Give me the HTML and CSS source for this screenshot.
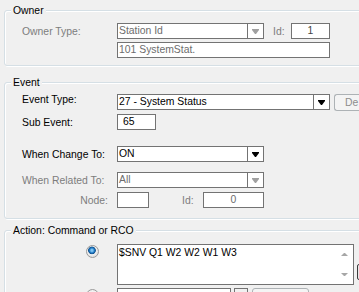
FILE: index.html
```html
<!DOCTYPE html>
<html lang="en">
<head>
    <meta charset="UTF-8">
    <title>Event Action</title>
    <link rel="stylesheet" href="styles.css">
</head>
<body>
    <fieldset class="group owner">
        <legend>Owner</legend>
        <div class="row first">
            <span class="lbl off">Owner Type:</span>
            <div class="box combo off w147"><span class="val">Station Id</span><span class="drop"></span></div>
            <span class="id-lbl off">Id:</span>
            <div class="box off num w39 dark">1</div>
        </div>
        <div class="row gap3">
            <span class="lbl"></span>
            <div class="box off w213">101 SystemStat.</div>
        </div>
    </fieldset>

    <fieldset class="group event">
        <legend>Event</legend>
        <div class="row first top">
            <span class="lbl">Event Type:</span>
            <div class="box combo w213"><span class="val">27 - System Status</span><span class="drop"></span></div>
            <button class="btn" disabled>De</button>
        </div>
        <div class="row gap4">
            <span class="lbl">Sub Event:</span>
            <div class="box w39 pad">65</div>
        </div>
        <div class="row gap16">
            <span class="lbl">When Change To:</span>
            <div class="box combo w147"><span class="val">ON</span><span class="drop"></span></div>
        </div>
        <div class="row gap10">
            <span class="lbl off">When Related To:</span>
            <div class="box combo off w147"><span class="val">All</span><span class="drop"></span></div>
        </div>
        <div class="row gap4">
            <span class="lbl off right">Node:</span>
            <div class="box w32"></div>
            <span class="id-lbl off node">Id:</span>
            <div class="box off num w61">0</div>
        </div>
    </fieldset>

    <fieldset class="group action">
        <legend>Action: Command or RCO</legend>
        <div class="row memo-row">
            <span class="pick"><span class="radio on"></span></span>
            <div class="memo">
                <div class="memo-text">$SNV Q1 W2 W2 W1 W3</div>
                <div class="scroll"><span class="arr up"></span><span class="arr down"></span></div>
            </div>
            <button class="side"></button>
        </div>
        <div class="row memo-row next">
            <span class="pick"><span class="radio"></span></span>
            <div class="box w114"></div>
            <button class="tiny"></button>
            <button class="btn plain"></button>
        </div>
    </fieldset>
</body>
</html>
```

FILE: styles.css
```css
body {
    margin: 0;
    width: 359px;
    height: 292px;
    overflow: hidden;
    background: #f0f0f0;
    font-family: "Liberation Sans", Arial, sans-serif;
    font-size: 10.4px;
    color: #000;
}
.group {
    margin: 0 0 0 4px;
    padding: 0;
    min-width: 0;
    width: 400px;
    border: 1px solid #d5dfe5;
    border-radius: 3px;
    box-shadow: inset 1px 1px 0 #fff, 1px 1px 0 #fff;
}
.group legend {
    margin-left: 6px;
    padding: 0 2px;
    line-height: 13px;
    background: #f0f0f0;
}
.owner {
    margin-top: 4px;
    padding-bottom: 7px;
}
.event {
    margin-top: 10px;
    padding-bottom: 10px;
}
.action {
    margin-top: 5px;
    height: 120px;
}
.row {
    display: flex;
    align-items: center;
    height: 16px;
    padding-left: 17px;
}
.row.first { margin-top: 6px; }
.event .row.first { margin-top: 5px; }
.row.top { align-items: flex-start; }
.gap3 { margin-top: 3px; }
.gap4 { margin-top: 4px; }
.gap10 { margin-top: 10px; }
.gap16 { margin-top: 16px; }
.lbl {
    width: 95px;
    flex: none;
    white-space: nowrap;
}
.lbl.right {
    text-align: right;
    padding-right: 9px;
    box-sizing: border-box;
}
.off { color: #7d7d7d; }
.box {
    box-sizing: border-box;
    height: 16px;
    flex: none;
    border: 1px solid #737373;
    background: #fff;
    padding: 0 1px;
    line-height: 14px;
    white-space: nowrap;
    overflow: hidden;
}
.box.off { color: #6d6d6d; }
.box.dark { color: #444; }
.box.pad { padding-left: 5px; }
.num { text-align: center; }
.w32 { width: 32px; }
.w39 { width: 39px; }
.w61 { width: 61px; }
.w114 { width: 114px; }
.w147 { width: 147px; }
.w213 { width: 213px; }
.combo {
    display: flex;
    padding: 0;
}
.combo .val {
    flex: 1;
    padding-left: 1px;
    overflow: hidden;
}
.combo .drop {
    width: 15px;
    border-left: 1px solid #737373;
    display: flex;
    align-items: center;
    justify-content: center;
}
.combo .drop::before {
    content: "";
    width: 1px;
    height: 0;
    margin-top: 2px;
    border-left: 3px solid transparent;
    border-right: 3px solid transparent;
    border-top: 4px solid #000;
    box-shadow: 0 -1px 0 #000;
}
.combo.off .drop::before {
    border-top-color: #a0a0a0;
    box-shadow: 0 -1px 0 #a0a0a0;
}
.id-lbl {
    width: 18px;
    margin-left: 9px;
    flex: none;
}
.id-lbl.node {
    width: 21px;
    margin-left: 33px;
}
.btn {
    box-sizing: border-box;
    flex: none;
    height: 17px;
    width: 25px;
    margin-left: 4px;
    padding: 0 0 0 10px;
    border: 1px solid #adb2b5;
    border-right: 0;
    border-radius: 3px 0 0 3px;
    background: #f4f4f4;
    color: #8d8d8d;
    font: inherit;
    text-align: left;
    white-space: nowrap;
}
.memo-row {
    height: auto;
    align-items: flex-start;
    margin-top: 7px;
}
.memo-row.next { margin-top: 3px; }
.pick {
    width: 95px;
    flex: none;
    display: flex;
    justify-content: flex-end;
    padding: 1px 18px 0 0;
    box-sizing: border-box;
}
.radio {
    width: 13px;
    height: 13px;
    box-sizing: border-box;
    border-radius: 50%;
    border: 1px solid #9a9a9a;
    background: radial-gradient(circle, #f2f2f2 0 5px, #dedede 6px);
}
.radio.on {
    background: radial-gradient(circle at 45% 40%, #7cc3f2 0 1px, #1d78c4 2.5px, #14528c 3.5px, #f4f4f4 4.2px, #e2e2e2 6px);
}
.memo {
    box-sizing: border-box;
    width: 237px;
    height: 41px;
    flex: none;
    display: flex;
    border: 1px solid #737373;
    background: #fff;
}
.memo-text {
    flex: 1;
    padding: 2px 1px;
    line-height: 12px;
}
.scroll {
    width: 17px;
    display: flex;
    flex-direction: column;
    justify-content: space-between;
    align-items: center;
    padding: 8px 0 8px;
}
.arr {
    width: 1px;
    height: 0;
    border-left: 3px solid transparent;
    border-right: 3px solid transparent;
}
.arr.up { border-bottom: 3px solid #a7a7a7; }
.arr.down { border-top: 3px solid #a7a7a7; }
.side {
    flex: none;
    width: 30px;
    height: 16px;
    margin: 20px 0 0 3px;
    border: 1px solid #3c3c3c;
    border-radius: 2px;
    background: #e8e8e8;
}
.tiny {
    flex: none;
    width: 13px;
    height: 16px;
    margin-left: 3px;
    border: 1px solid #737373;
    background: #f0f0f0;
}
.btn.plain {
    width: 57px;
    height: 22px;
    margin-left: 4px;
    padding: 0;
    border: 1px solid #adb2b5;
    border-radius: 3px;
}
```
